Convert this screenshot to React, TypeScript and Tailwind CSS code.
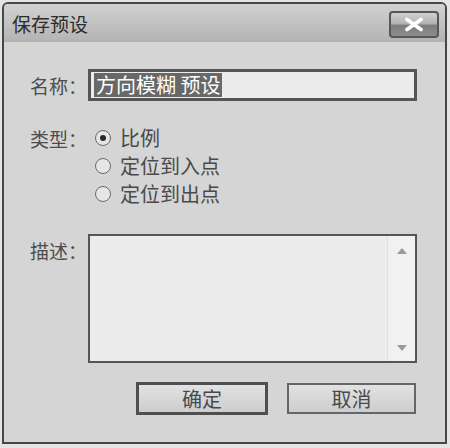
import React from "react";

const font = { fontFamily: '"Noto Sans CJK SC", "Noto Sans", sans-serif' };

function Radio({ checked, label }: { checked?: boolean; label: string }) {
  return (
    <label className="flex h-[28px] items-center pl-[7px]">
      <span className="flex h-[16px] w-[16px] items-center justify-center rounded-full border border-[#6a6a6a] bg-[#e6e6e6]">
        {checked && <span className="h-[6px] w-[6px] rounded-full bg-[#2a2a2a]" />}
      </span>
      <span className="ml-[9px] text-[20px] leading-none text-[#4a4a4a]">{label}</span>
    </label>
  );
}

export default function App() {
  return (
    <div className="h-[448px] w-[450px] overflow-hidden bg-[#e4e4e4] pl-[2px] pt-[2px]" style={font}>
      <div className="flex h-[442px] w-[445px] flex-col rounded-t-[6px] border-2 border-[#474747] bg-[#d5d5d5]">
        {/* title bar */}
        <div className="flex h-[38px] items-center justify-between rounded-t-[4px] bg-gradient-to-b from-[#d2d2d2] to-[#b3b3b3] pl-[8px] pr-[6px]">
          <span className="text-[19px] leading-none text-[#2c2c2c]">保存预设</span>
          <button className="mt-[3px] flex h-[27px] w-[50px] items-center justify-center rounded-[4px] border-2 border-[#575757] bg-[linear-gradient(to_bottom,#d0d0d0_0%,#b4b4b4_45%,#7c7c7c_55%,#8e8e8e_100%)]">
            <svg width="22" height="15" viewBox="0 0 22 15">
              <path d="M4 2.5 L18 12.5 M18 2.5 L4 12.5" stroke="#ffffff" strokeWidth="3.8" strokeLinecap="round" />
            </svg>
          </button>
        </div>

        {/* body */}
        <div className="flex flex-1 flex-col pl-[26px] pr-[28px] pt-[27px]">
          <div className="flex items-center">
            <span className="w-[58px] text-[19px] leading-none text-[#4d4d4d]">名称：</span>
            <div className="flex h-[32px] flex-1 items-center border-[3px] border-[#555555] bg-[#ececec] pl-[3px]">
              <span className="bg-[#686868] px-[2px] text-[20px] leading-[24px] text-white">方向模糊 预设</span>
            </div>
          </div>

          <div className="mt-[23px] flex">
            <span className="flex h-[28px] w-[58px] items-center text-[19px] leading-none text-[#4d4d4d]">类型：</span>
            <div className="flex flex-col">
              <Radio checked label="比例" />
              <Radio label="定位到入点" />
              <Radio label="定位到出点" />
            </div>
          </div>

          <div className="mt-[26px] flex">
            <span className="w-[58px] pt-[7px] text-[19px] leading-none text-[#4d4d4d]">描述：</span>
            <div className="flex h-[129px] flex-1 border-2 border-[#555555] bg-[#ececec]">
              <div className="flex-1" />
              <div className="flex w-[28px] flex-col items-center justify-between border-l border-[#e2e2e2] bg-[#f1f1f1] pb-[10px] pt-[12px]">
                <svg width="10" height="6" viewBox="0 0 10 6">
                  <path d="M0 6 L5 0 L10 6 Z" fill="#9a9a9a" />
                </svg>
                <svg width="10" height="6" viewBox="0 0 10 6">
                  <path d="M0 0 L10 0 L5 6 Z" fill="#9a9a9a" />
                </svg>
              </div>
            </div>
          </div>

          <div className="mt-[19px] flex items-center justify-end gap-[19px] pr-[1px]">
            <button className="h-[33px] w-[132px] border-[3px] border-[#4f4f4f] bg-gradient-to-b from-[#e2e2e2] to-[#cdcdcd] text-[20px] leading-none text-[#4a4a4a]">
              确定
            </button>
            <button className="h-[31px] w-[129px] border-2 border-[#666666] bg-gradient-to-b from-[#e2e2e2] to-[#cdcdcd] text-[20px] leading-none text-[#4a4a4a]">
              取消
            </button>
          </div>
        </div>
      </div>
    </div>
  );
}
